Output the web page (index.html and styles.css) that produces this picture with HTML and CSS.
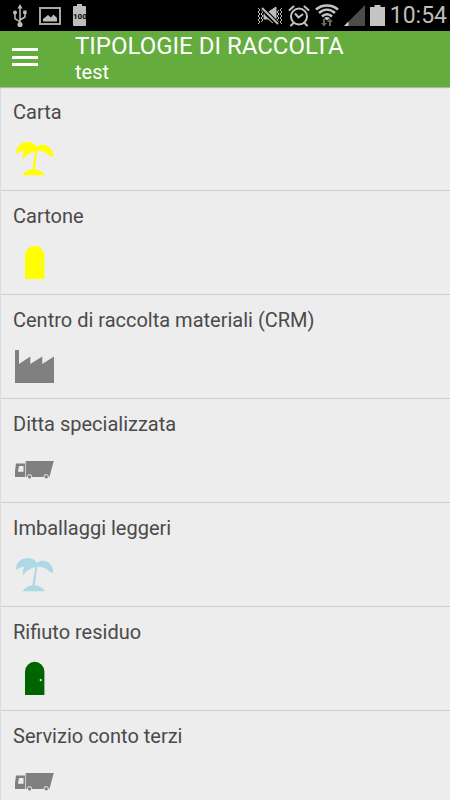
FILE: index.html
```
<!DOCTYPE html>
<html lang="it">
<head>
<meta charset="utf-8">
<meta name="viewport" content="width=device-width, initial-scale=1">
<title>Tipologie di raccolta</title>
<link rel="stylesheet" href="styles.css">
</head>
<body>
<svg class="sprite" aria-hidden="true">
  <symbol id="palm" viewBox="1 0 44 40">
    <path d="M4 15C3.500 8 9 3 15 3C19.500 3 23 5 24.800 7.800C28 5.400 31.500 5.200 34.500 6.500C39 8.500 41.800 13 41 18C38.500 17.800 36.500 15.500 34 13.800C31.500 12 28.500 11.400 25.300 11.800L22.800 30.300C27 31 31 33 33.200 36.300H10.500C12.500 33 16 31 20.400 30.300L23.300 12.300C19.500 13 15 15 11.500 20C10 17 11 14 13 12.200C9 11.800 6.500 13 4 15Z"/>
  </symbol>
  <symbol id="door" viewBox="1 0 44 40">
    <path fill-rule="evenodd" d="M13 36V12.500A9.700 9.700 0 0 1 32.400 12.500V36ZM28.700 20A1.100 1.100 0 1 0 28.700 22.200A1.100 1.100 0 1 0 28.700 20Z"/>
  </symbol>
  <symbol id="factory" viewBox="1 0 44 40">
    <path d="M3 36V3H7V17L18.300 9.500V17L30.300 9.500V17L42 9.500V36Z"/>
  </symbol>
  <symbol id="truck" viewBox="1 0 44 40">
    <path fill-rule="evenodd" d="M4 12.500H13V26H3V20ZM7 15L6 20.800H11.500V15Z"/>
    <path d="M13.700 10H41.700L37.500 26H13.700Z"/>
    <circle class="wheel" cx="17.500" cy="25.800" r="2.200"/>
    <circle class="wheel" cx="34.200" cy="25.800" r="2.200"/>
  </symbol>
</svg>
<div class="app">
  <div class="status">
    <div class="status-group status-left">
      <svg width="14" height="24" viewBox="0 0 14 24" fill="none" stroke="#bdbdbd" stroke-width="1.500" role="img" aria-label="USB">
        <path d="M7 3V21M7 18L2 14.500V9M7 16L12 13V9"/>
        <path d="M7 0L9.500 4.500H4.500ZM10.200 6.500H13.600V10H10.200Z" fill="#bdbdbd" stroke="none"/>
        <circle cx="2" cy="8.500" r="2" fill="#bdbdbd" stroke="none"/>
        <circle cx="7" cy="20.500" r="2.600" fill="#bdbdbd" stroke="none"/>
      </svg>
      <svg width="22" height="18" viewBox="0 0 22 18" role="img" aria-label="Immagine">
        <path d="M1 1H21V17H1Z" fill="none" stroke="#a8a8a8" stroke-width="2"/>
        <path d="M4 14.500V12L9 8L12 10.500L14.500 7.500L18 11V14.500Z" fill="#bdbdbd"/>
      </svg>
      <div class="battery-full">100</div>
    </div>
    <div class="status-group status-right">
      <svg width="26" height="20" viewBox="0 0 26 20" fill="none" stroke="#bdbdbd" role="img" aria-label="Vibrazione">
        <path d="M1 2L3 4L1 6L3 8L1 10L3 12L1 14L3 16L1 18M4 4L6 6L4 8L6 10L4 12L6 14L4 16M25 2L23 4L25 6L23 8L25 10L23 12L25 14L23 16L25 18M22 4L20 6L22 8L20 10L22 12L20 14L22 16"/>
        <path d="M7 7H10L19 1V15L11 8M7 8V13H11L16 17" fill="#bdbdbd"/>
        <path d="M5 2L21 18" stroke="#000" stroke-width="4"/>
        <path d="M5 2L21 18" stroke-width="2"/>
      </svg>
      <svg width="22" height="22" viewBox="0 0 22 22" fill="none" stroke="#c4c4c4" stroke-width="2" stroke-linecap="round" role="img" aria-label="Sveglia">
        <circle cx="11" cy="11.500" r="8"/>
        <path d="M1.500 5L5.500 1.500M20.500 5L16.500 1.500M5 18.500L3 20.500M17 18.500L19 20.500M7.500 9L10.500 12.500L14.500 9.500"/>
      </svg>
      <svg width="24" height="23" viewBox="0 0 24 23" fill="none" stroke="#c4c4c4" stroke-width="2.500" role="img" aria-label="Wi-Fi">
        <path d="M1 5.500C7 0 17 0 23 5.500M4 9C9 4.500 15 4.500 20 9M7 12.500C10 9.500 14 9.500 17 12.500"/>
        <path d="M9 14Q12 12 15 14L12 16.500Z" fill="#c4c4c4" stroke="none"/>
        <path d="M9 15V20M15 22V17" stroke="#666" stroke-width="2"/>
        <path d="M6 19H12L9 22.500ZM12 18H18L15 14.500Z" fill="#666" stroke="none"/>
      </svg>
      <svg width="21" height="21" viewBox="0 0 21 21" role="img" aria-label="Segnale">
        <path d="M21 0V21H0Z" fill="#4c4c4c"/>
        <path d="M4.500 16.500V21H0Z" fill="#d0d0d0"/>
      </svg>
      <svg width="15" height="21" viewBox="0 0 15 21" role="img" aria-label="Batteria">
        <path d="M4.500 0H10.500V2H15V21H0V2H4.500Z" fill="#c4c4c4"/>
      </svg>
      <time class="clock">10:54</time>
    </div>
  </div>
  <header class="bar">
    <button class="menu" type="button" aria-label="Menu"><span></span><span></span><span></span></button>
    <div>
      <h1 class="title">TIPOLOGIE DI RACCOLTA</h1>
      <p class="subtitle">test</p>
    </div>
  </header>
  <ul class="list">
    <li class="row"><h2 class="name">Carta</h2><svg class="icon yellow"><use href="#palm"/></svg></li>
    <li class="row"><h2 class="name">Cartone</h2><svg class="icon yellow"><use href="#door"/></svg></li>
    <li class="row"><h2 class="name">Centro di raccolta materiali (CRM)</h2><svg class="icon gray"><use href="#factory"/></svg></li>
    <li class="row"><h2 class="name">Ditta specializzata</h2><svg class="icon gray"><use href="#truck"/></svg></li>
    <li class="row"><h2 class="name">Imballaggi leggeri</h2><svg class="icon blue"><use href="#palm"/></svg></li>
    <li class="row"><h2 class="name">Rifiuto residuo</h2><svg class="icon green"><use href="#door"/></svg></li>
    <li class="row"><h2 class="name">Servizio conto terzi</h2><svg class="icon gray"><use href="#truck"/></svg></li>
  </ul>
</div>
</body>
</html>
```
FILE: styles.css
```
* {
  box-sizing: border-box;
  margin: 0;
  padding: 0;
}

body {
  font-family: Roboto, sans-serif;
  background: #ededed;
  color: #4a4a4a;
}

.sprite {
  display: none;
}

.app {
  display: flex;
  flex-direction: column;
  height: 100vh;
  overflow: hidden;
}

.status {
  display: flex;
  flex: none;
  justify-content: space-between;
  height: 31px;
  padding: 0 3px 0 13px;
  background: #000;
  color: #bdbdbd;
}

.status-group {
  display: flex;
  align-items: center;
}

.status-left {
  gap: 12px;
}

.status-right {
  gap: 5px;
}

.battery-full {
  position: relative;
  width: 13px;
  height: 20px;
  border-radius: 1px;
  background: #bdbdbd;
  color: #000;
  font-family: "Liberation Sans Narrow", Roboto, sans-serif;
  font-size: 8px;
  font-weight: 700;
  line-height: 22px;
  text-align: center;
}

.battery-full::before {
  content: "";
  position: absolute;
  top: -2px;
  left: 4px;
  width: 5px;
  height: 2px;
  background: #bdbdbd;
}

.clock {
  font-size: 23px;
  line-height: 30px;
}

.bar {
  display: flex;
  flex: none;
  align-items: center;
  gap: 37px;
  height: 56px;
  padding: 0 12px 2px;
  background: #64ac3e;
  color: #fff;
  box-shadow: 0 1px 1px #b4b4b4;
  z-index: 1;
}

.menu {
  display: flex;
  flex-direction: column;
  justify-content: space-between;
  width: 26px;
  height: 18px;
  margin-bottom: 2px;
  border: 0;
  background: none;
}

.menu span {
  width: 100%;
  height: 3px;
  background: #fff;
}

.title {
  font-size: 24px;
  font-weight: 400;
  line-height: 28px;
}

.subtitle {
  font-size: 20px;
  line-height: 24px;
}

.list {
  flex: 1;
  min-height: 0;
  overflow: hidden;
  list-style: none;
  border-left: 1px solid #dcdcdc;
}

.row {
  height: 104px;
  padding: 12px 12px 0;
  border-bottom: 1px solid #cdcdcd;
}

.name {
  font-size: 20px;
  font-weight: 400;
  line-height: 26px;
}

.icon {
  display: block;
  width: 44px;
  height: 40px;
  margin-top: 14px;
}

.yellow {
  fill: #ff0;
}

.gray {
  fill: #808080;
}

.blue {
  fill: #add8e6;
}

.green {
  fill: #006400;
}

.wheel {
  stroke: #ededed;
  stroke-width: 1px;
}
```
